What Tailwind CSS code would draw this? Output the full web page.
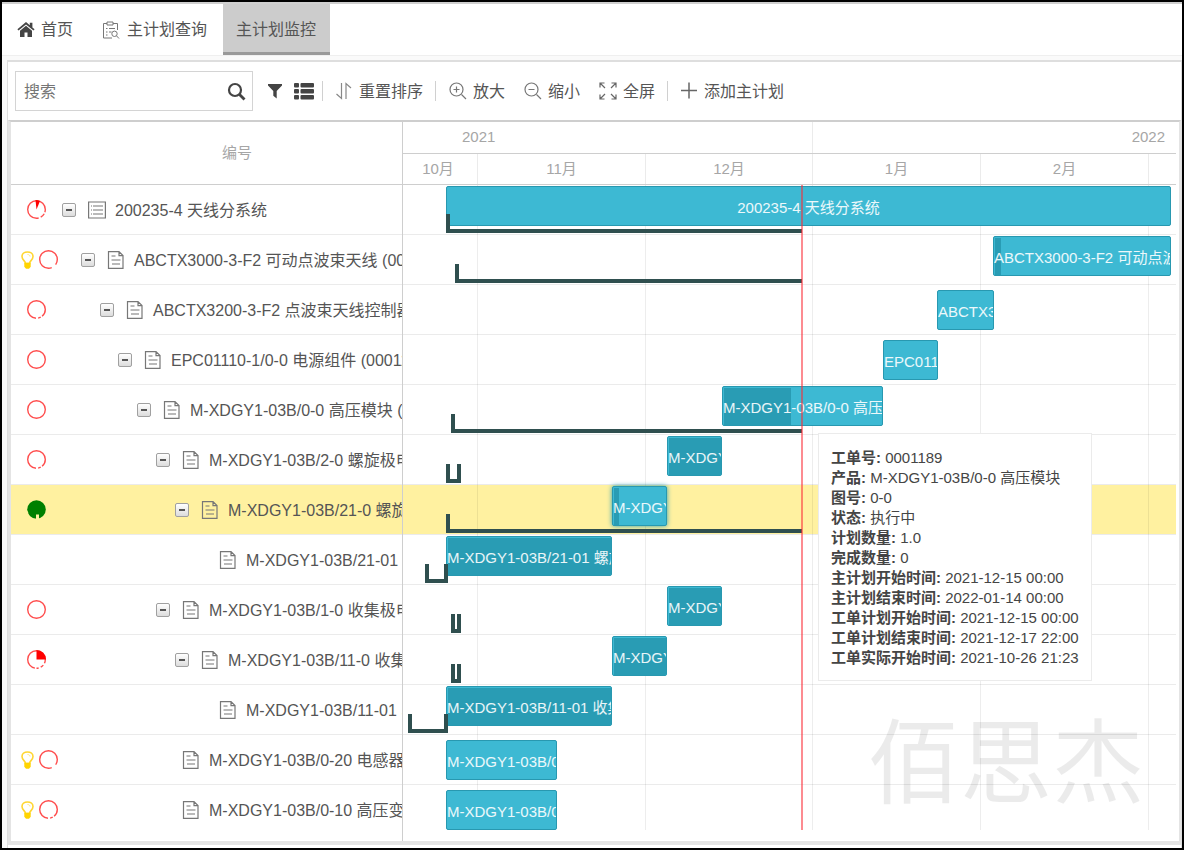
<!DOCTYPE html>
<html lang="zh-CN">
<head>
<meta charset="utf-8">
<meta name="viewport" content="width=device-width, initial-scale=1">
<title>主计划监控</title>
<script src="https://cdn.jsdelivr.net/npm/@tailwindcss/browser@4"></script>
</head>
<body class="min-h-screen overflow-x-hidden border-2 border-black bg-[#fafafa] font-['Liberation_Sans','Noto_Sans_CJK_SC',sans-serif] text-base text-[#555]">

<svg class="hidden" aria-hidden="true">
  <symbol id="i-doc" viewBox="0 0 18 18"><path d="M1.500 .6h10.500l4 4v12.800H1.500zM12 .6v4h4M4.500 5h4M4.500 9h9M5 13h8" fill="none" stroke="currentColor" stroke-width="1.200"/></symbol>
  <symbol id="i-list" viewBox="0 0 18 18"><path d="M.6 1h16.800v16H.6zM3 5h1M5 5h10M3 9h1M5 9h10M3 13h1M5 13h10" fill="none" stroke="currentColor" stroke-width="1.200"/></symbol>
  <symbol id="i-bulb" viewBox="0 0 13 18"><path d="M4.500 12.500c0-2.500-3.500-3.500-3.500-7C1 2.800 3.400 1 6.500 1S12 2.800 12 5.500c0 3.500-3.500 4.500-3.500 7z" fill="none" stroke="#ffd633" stroke-width="1.600"/><path d="M6.500 3.500c1.500 0 2.500.8 2.500 2" fill="none" stroke="#ffe680"/><path d="M3.300 11.800h6.400v4L8 17.700H5l-1.700-1.900z" fill="#ffd400"/></symbol>
</svg>

<div class="h-[2px] bg-[#cfcfcf]"></div>
<nav class="flex h-[52px] border-b border-[#efefef] bg-white">
  <a href="#home" class="flex items-center gap-1.5 pl-[15px]">
    <svg class="h-[17px] w-[18px] text-[#444]" viewBox="0 0 18 17" fill="currentColor"><path d="M9 1 .4 8.300l1.100 1.300L9 3.400l7.500 6.200 1.100-1.300L15.400 6.400V1.700h-2.600v2.500z"/><path d="M9 4.700 3 9.700V16h4.500v-4.500h3V16H15V9.700z"/></svg>
    首页</a>
  <a href="#query" class="flex items-center gap-[7px] pl-[29px]">
    <svg class="h-[18px] w-[18px] text-[#777]" viewBox="0 0 18 18" fill="none" stroke="currentColor"><path d="M10 17H1.500V2.500H5M11 2.500h4.500V9M5 1h6v3H5zM4 7.500h1.500M7 7.500h6M4 11h1.500M7 11h2.500M4 14h1.500"/><circle cx="12.500" cy="12.800" r="2.700"/><path d="m14.500 14.800 2.500 2.700"/></svg>
    主计划查询</a>
  <a href="#monitor" aria-current="page" class="ml-4 flex items-center border-b-[3px] border-[#999] bg-[#ccc] pr-[14px] pl-[13px] pt-[3px]">主计划监控</a>
</nav>

<main class="mt-1 ml-[5px] border-t-2 border-r border-l border-[#dedede] bg-white pb-[3px]">
  <div class="flex h-[58px] items-center pl-[7px]">
    <div class="flex h-10 w-[238px] items-center border border-[#d4d4d4]">
      <input type="text" aria-label="搜索" placeholder="搜索" class="min-w-0 flex-1 pt-[2px] pl-2 outline-none placeholder:text-[#757575]">
      <button type="button" aria-label="查找" class="mr-[6px] text-[#444]"><svg class="h-[19px] w-[19px]" viewBox="0 0 19 19" fill="none" stroke="currentColor" stroke-width="2.200"><circle cx="8" cy="8" r="6"/><path d="m12.500 12.500 5 5" stroke-width="2.800"/></svg></button>
    </div>
    <button type="button" aria-label="筛选" class="ml-[14px] text-[#444]"><svg class="h-4 w-4" viewBox="0 0 16 16" fill="currentColor"><path d="M1 1h14v1.500L9.700 8v7.500L6.300 12.800V8L1 2.500z"/></svg></button>
    <button type="button" aria-label="列表" class="ml-[11px] text-[#444]"><svg class="h-[17px] w-5" viewBox="0 0 20 17" fill="currentColor"><rect x="0" y="0" width="5" height="4.500" rx="1"/><rect x="6.500" y="0" width="13.500" height="4.500" rx="1"/><rect x="0" y="6" width="5" height="4.500" rx="1"/><rect x="6.500" y="6" width="13.500" height="4.500" rx="1"/><rect x="0" y="12" width="5" height="4.500" rx="1"/><rect x="6.500" y="12" width="13.500" height="4.500" rx="1"/></svg></button>
    <span class="ml-2 h-5 w-px bg-[#d0d0d0]"></span>
    <button type="button" class="ml-3 flex items-center gap-1.5"><svg class="h-[18px] w-[18px]" viewBox="0 0 18 18" fill="none" stroke="#888" stroke-width="1.200"><path d="M6.500 1v15.500L1.500 12M11 17V1.500L16 6"/></svg><span class="pt-[2px]">重置排序</span></button>
    <span class="ml-3 h-5 w-px bg-[#d0d0d0]"></span>
    <button type="button" class="ml-[13px] flex items-center gap-1.5"><svg class="h-[18px] w-[18px]" viewBox="0 0 18 18" fill="none" stroke="#777" stroke-width="1.200"><circle cx="7.500" cy="7.500" r="6.500"/><path d="m12.500 12.500 4.500 4.500M4.500 7.500h6M7.500 4.500v6"/></svg><span class="pt-[2px]">放大</span></button>
    <button type="button" class="ml-[19px] flex items-center gap-1.5"><svg class="h-[18px] w-[18px]" viewBox="0 0 18 18" fill="none" stroke="#777" stroke-width="1.200"><circle cx="7.500" cy="7.500" r="6.500"/><path d="m12.500 12.500 4.500 4.500M4.500 7.500h6"/></svg><span class="pt-[2px]">缩小</span></button>
    <button type="button" class="ml-[19px] flex items-center gap-1.5"><svg class="h-[18px] w-[18px]" viewBox="0 0 18 18" fill="none" stroke="#666" stroke-width="1.200"><path d="M1 5.500V1h4.500M1 1l5 5M12.500 1H17v4.500M17 1l-5 5M1 12.500V17h4.500M1 17l5-5M17 12.500V17h-4.500M17 17l-5-5"/></svg><span class="pt-[2px]">全屏</span></button>
    <span class="ml-3 h-5 w-px bg-[#d0d0d0]"></span>
    <button type="button" class="ml-3 flex items-center gap-1.5"><svg class="h-[18px] w-[18px]" viewBox="0 0 18 18" fill="none" stroke="#666" stroke-width="1.500"><path d="M1 8.500h16M9 .5v16"/></svg><span class="pt-[2px]">添加主计划</span></button>
  </div>

  <section class="flex border-t-2 border-r-2 border-b-4 border-l-[3px] border-[#e4e4e4] border-t-[#cecece]">
    <div class="w-[392px] shrink-0 border-r border-[#cecece]">
      <div class="h-[708px] overflow-hidden">
      <table class="w-full table-fixed">
        <colgroup><col class="w-[51px]"><col></colgroup>
        <thead><tr><th class="p-0" aria-label="状态"><div class="h-[63px] border-b border-[#cecece]"></div></th><th class="p-0"><div class="flex h-[63px] items-center justify-center border-b border-[#cecece] pl-[10px] text-[15px] font-normal text-[#a6a6a6]">编号</div></th></tr></thead>
        <tbody id="tree"></tbody>
      </table>
      </div>
    </div>

    <div class="min-w-0 flex-1 pr-[3px] pb-[11px]">
      <div class="overflow-hidden text-[15px] text-[#a6a6a6]">
        <div class="flex h-8 items-center border-b border-[#cecece]">
          <div class="flex h-full w-[410px] shrink-0 items-center border-r border-[#ebebeb] pl-[59px]">2021</div>
          <div class="flex-1 pr-[11px] text-right">2022</div>
        </div>
        <div class="flex h-[31px] border-b border-[#cecece] text-center leading-[30px]">
          <div class="w-[75px] shrink-0 border-r border-[#ebebeb] pr-1">10月</div>
          <div class="w-[168px] shrink-0 border-r border-[#ebebeb]">11月</div>
          <div class="w-[167px] shrink-0 border-r border-[#ebebeb]">12月</div>
          <div class="w-[168px] shrink-0 border-r border-[#ebebeb]">1月</div>
          <div class="w-[168px] shrink-0 border-r border-[#ebebeb]">2月</div>
        </div>
      </div>
      <div class="relative h-[645px]">
        <div class="absolute inset-0 overflow-hidden">
          <div id="rows"></div>
          <div class="absolute inset-0 flex">
            <div class="w-[75px] shrink-0 border-r border-black/7"></div>
            <div class="w-[168px] shrink-0 border-r border-black/7"></div>
            <div class="w-[167px] shrink-0 border-r border-black/7"></div>
            <div class="w-[168px] shrink-0 border-r border-black/7"></div>
            <div class="w-[168px] shrink-0 border-r border-black/7"></div>
          </div>
          <div id="bars" class="absolute inset-0"></div>
          <div class="absolute inset-y-0 left-[398px] w-[2px] bg-red-500/55"></div>
        </div>
        <div class="pointer-events-none absolute right-[32px] bottom-[20px] text-[92px] leading-[92px] whitespace-nowrap text-black/8">佰思杰</div>
        <div role="tooltip" class="absolute top-[248px] left-[415px] border border-[#ebebeb] bg-white pt-[14px] pr-3 pb-3 pl-[12px] text-[15px] leading-5 whitespace-nowrap text-[#454545]">
          <div><b>工单号:</b> 0001189</div>
          <div><b>产品:</b> M-XDGY1-03B/0-0 高压模块</div>
          <div><b>图号:</b> 0-0</div>
          <div><b>状态:</b> 执行中</div>
          <div><b>计划数量:</b> 1.0</div>
          <div><b>完成数量:</b> 0</div>
          <div><b>主计划开始时间:</b> 2021-12-15 00:00</div>
          <div><b>主计划结束时间:</b> 2022-01-14 00:00</div>
          <div><b>工单计划开始时间:</b> 2021-12-15 00:00</div>
          <div><b>工单计划结束时间:</b> 2021-12-17 22:00</div>
          <div><b>工单实际开始时间:</b> 2021-10-26 21:23</div>
        </div>
      </div>
    </div>
  </section>
</main>

<script>
// level: tree depth; bar: [start, end]; done: finished width; actual: [start, end, closed]
const tasks = [
  {name:'200235-4 天线分系统', level:0, icon:'i-list', open:1, dash:'30 3 9 4 54 0', slice:'M9.500 9.500 8.500 0 A9.500 9.500 0 0 1 13 1z', bar:[43,768], done:0, actual:[43,399], center:1},
  {name:'ABCTX3000-3-F2 可动点波束天线 (0001185)', level:1, open:1, bulb:1, dash:'35 9 56 0', bar:[590,768], done:6, actual:[52,399]},
  {name:'ABCTX3200-3-F2 点波束天线控制器 (0001186)', level:2, open:1, dash:'39 3 5 4 49 0', bar:[534,591], done:0},
  {name:'EPC01110-1/0-0 电源组件 (0001187)', level:3, open:1, dash:'100 0', bar:[480,535], done:0},
  {name:'M-XDGY1-03B/0-0 高压模块 (0001189)', level:4, open:1, dash:'100 0', bar:[319,480], done:67, actual:[48,399]},
  {name:'M-XDGY1-03B/2-0 螺旋极电源 (0001190)', level:5, open:1, dash:'39 3 5 4 49 0', bar:[264,319], done:55, actual:[43,58,1]},
  {name:'M-XDGY1-03B/21-0 螺旋极板 (0001191)', level:6, open:1, full:1, bar:[209,264], done:5, actual:[43,399], selected:1},
  {name:'M-XDGY1-03B/21-01 螺旋极板', level:7, bar:[43,209], done:166, actual:[22,45,1]},
  {name:'M-XDGY1-03B/1-0 收集极电源 (0001192)', level:5, open:1, dash:'100 0', bar:[264,319], done:55, actual:[48,58,1]},
  {name:'M-XDGY1-03B/11-0 收集极板 (0001193)', level:6, open:1, dash:'32 4 6 4 4 3 47 0', slice:'M9.500 9.500V0A9.500 9.500 0 0 1 19 9.500z', bar:[209,264], done:55, actual:[48,58,1]},
  {name:'M-XDGY1-03B/11-01 收集极板', level:7, bar:[43,209], done:166, actual:[5,45,1]},
  {name:'M-XDGY1-03B/0-20 电感器组件', level:5, bulb:1, dash:'35 9 56 0', bar:[43,154], done:0},
  {name:'M-XDGY1-03B/0-10 高压变压器', level:5, bulb:1, dash:'39 3 5 4 49 0', bar:[43,154], done:0}
];

const ring = t => t.full
  ? '<svg class="h-[19px] w-[19px] shrink-0" viewBox="0 0 19 19"><circle cx="9.500" cy="9.500" r="9.300" fill="#008000"/><path d="M9 14.500h3V19H9zM0 11l1.200 1v2.500L3 16.500H0z" fill="#fff1a0"/></svg>'
  : t.dash ? `<svg class="h-[19px] w-[19px] shrink-0" viewBox="0 0 19 19"><circle cx="9.500" cy="9.500" r="8.800" fill="none" stroke="#ff4d4d" stroke-width="1.400" pathLength="100" stroke-dasharray="${t.dash}" transform="rotate(-90 9.500 9.500)"/>${t.slice ? `<path d="${t.slice}" fill="red"/>` : ''}</svg>` : '';
const bulb = '<svg class="h-[18px] w-[13px] shrink-0"><use href="#i-bulb"/></svg>';
const toggle = '<button type="button" aria-label="折叠" class="flex h-[14px] w-[14px] shrink-0 items-center justify-center rounded-[2px] border border-[#a0a0a0] bg-linear-to-b from-white to-[#dcdcdc]"><span class="h-[2px] w-[6px] bg-[#555]"></span></button>';

document.getElementById('tree').innerHTML = tasks.map(t => `
  <tr class="${t.selected ? 'bg-[#fff1a0]' : ''}">
    <td class="p-0"><div class="flex h-[50px] items-center gap-[5px] border-b border-[#ebebeb] ${t.bulb ? 'pl-[10px]' : 'pl-4'}">${t.bulb ? bulb : ''}${ring(t)}</div></td>
    <td class="p-0"><div class="flex h-[50px] items-center overflow-hidden border-b border-[#ebebeb] whitespace-nowrap" style="padding-left:${Math.round(t.level * 18.75)}px">
      ${t.open ? toggle : '<span class="w-[14px] shrink-0"></span>'}
      <svg class="ml-3 h-[18px] w-[18px] shrink-0 text-[#777]"><use href="#${t.icon || 'i-doc'}"/></svg>
      <span class="ml-[9px] pt-[2px]">${t.name}</span></div></td>
  </tr>`).join('');

document.getElementById('rows').innerHTML = tasks.map(t =>
  `<div class="h-[50px] border-b border-[#ebebeb] ${t.selected ? 'bg-[#fff1a0]' : ''}"></div>`).join('');

document.getElementById('bars').innerHTML = tasks.map(t => `
  <div class="relative h-[50px]">
    <div class="absolute h-10 overflow-hidden rounded-[2px] border border-[#2898b0] bg-[#3db9d3] ${t.actual ? 'top-px' : 'top-[5px]'} ${t.selected ? 'shadow-[0_0_5px_#299cb4]' : ''}" style="left:${t.bar[0]}px;width:${t.bar[1] - t.bar[0]}px">
      <div class="absolute top-px bottom-0 left-px bg-[#299cb4]" style="width:${t.done}px"></div>
      <div class="relative text-[15px] leading-[42px] whitespace-nowrap text-white/90 ${t.center ? 'text-center' : ''}">${t.name}</div>
    </div>
    ${t.actual ? `<div class="absolute top-[29px] h-[19px] border-b-4 border-l-4 border-[#2f4f4f] ${t.actual[2] ? 'border-r-4' : ''}" style="left:${t.actual[0]}px;width:${t.actual[1] - t.actual[0]}px"></div>` : ''}
  </div>`).join('');
</script>
</body>
</html>
